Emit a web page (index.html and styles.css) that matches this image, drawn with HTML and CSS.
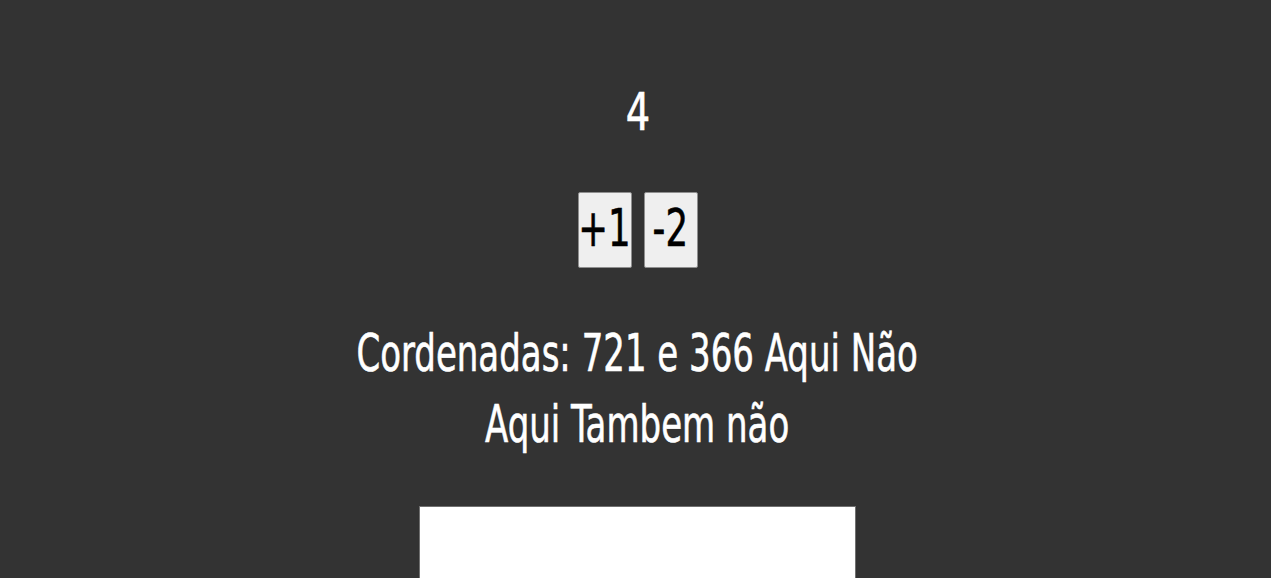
FILE: index.html
```html
<!DOCTYPE html>
<html lang="pt">
<head>
<meta charset="utf-8">
<title>Contador</title>
<link rel="stylesheet" href="styles.css">
</head>
<body>
<main class="app">
  <h1 class="count">4</h1>
  <div class="controls">
    <button class="btn" type="button"><span class="label">+1</span></button>
    <button class="btn" type="button"><span class="label">-2</span></button>
  </div>
  <p class="coords">Cordenadas: 721 e 366 Aqui Não<br>Aqui Tambem não</p>
  <div class="canvas"></div>
</main>
</body>
</html>
```

FILE: styles.css
```css
html, body {
  margin: 0;
  padding: 0;
  background: #333333;
  height: 100%;
  overflow: hidden;
}

.app {
  display: flex;
  flex-direction: column;
  align-items: center;
  gap: 48px;
  padding: 73px 0 0 4px;
  font-family: "DejaVu Sans Condensed", "DejaVu Sans", sans-serif;
  color: #ffffff;
  -webkit-text-stroke: 0.6px currentColor;
}

.count {
  margin: 0;
  font-size: 52px;
  font-weight: normal;
  line-height: 71px;
  padding-top: 4px;
  height: 71px;
  box-sizing: border-box;
  transform: scaleX(0.82);
}

.controls {
  display: flex;
  gap: 12px;
}

.btn {
  display: flex;
  align-items: center;
  justify-content: center;
  width: 54px;
  height: 76px;
  padding: 0 0 4px 0;
  margin: 0;
  background: #efefef;
  color: #000000;
  border: 1px solid #8f8f8f;
  border-radius: 2px;
  font-family: inherit;
  font-size: 52px;
  line-height: 1;
  overflow: visible;
}

.label {
  display: inline-block;
  transform: scaleX(0.76);
  white-space: nowrap;
}

.coords {
  margin: 0;
  font-size: 52px;
  line-height: 71px;
  text-align: center;
  padding-top: 2px;
  white-space: nowrap;
  transform: scaleX(0.727);
}

.canvas {
  width: 435px;
  height: 300px;
  background: #ffffff;
  border: 1px solid #707070;
  margin-top: -2px;
}
```
